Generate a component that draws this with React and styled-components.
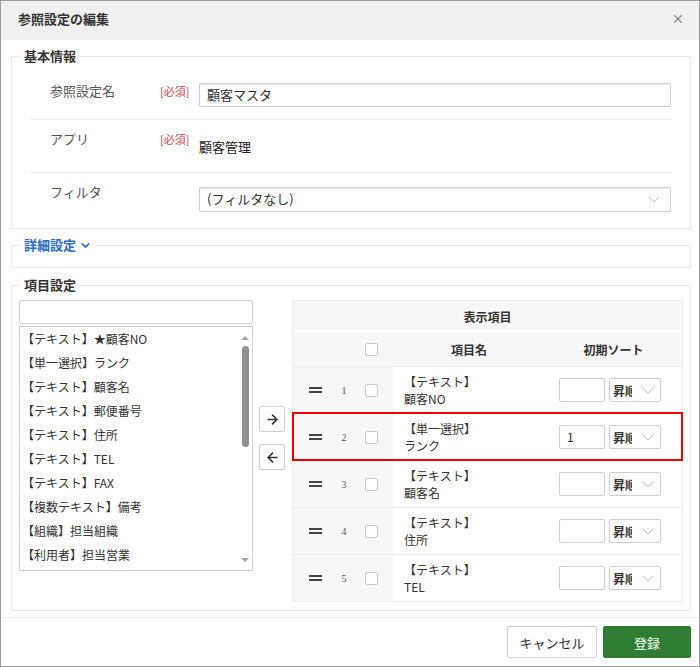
import { styled, createGlobalStyle } from "styled-components"
import { ArrowRight, ArrowLeft, ChevronDown, X } from "lucide-react"

const GlobalStyle = createGlobalStyle`
  body {
    margin: 0;
    font-family: "Noto Sans CJK JP", "Liberation Sans", sans-serif;
    font-size: 12px;
    color: #333;
    background: #fff;
  }
`

const fields = [
  "【テキスト】★顧客NO",
  "【単一選択】ランク",
  "【テキスト】顧客名",
  "【テキスト】郵便番号",
  "【テキスト】住所",
  "【テキスト】TEL",
  "【テキスト】FAX",
  "【複数テキスト】備考",
  "【組織】担当組織",
  "【利用者】担当営業",
]

const rows = [
  { no: 1, type: "【テキスト】", name: "顧客NO", sort: "" },
  { no: 2, type: "【単一選択】", name: "ランク", sort: "1", marked: true },
  { no: 3, type: "【テキスト】", name: "顧客名", sort: "" },
  { no: 4, type: "【テキスト】", name: "住所", sort: "" },
  { no: 5, type: "【テキスト】", name: "TEL", sort: "" },
]

const Chevron = () => (
  <svg width="12" height="7" viewBox="0 0 12 7">
    <polyline points="1,1 6,6 11,1" fill="none" stroke="#bdbdbd" strokeWidth="1" />
  </svg>
)

const Handle = () => (
  <svg width="13" height="6" viewBox="0 0 13 6">
    <rect x="0" y="0" width="13" height="2" fill="#444" />
    <rect x="0" y="4" width="13" height="2" fill="#444" />
  </svg>
)

export default function App() {
  return (
    <>
      <GlobalStyle />
      <Dialog>
        <Header>
          <Title>参照設定の編集</Title>
          <X size={14} color="#888" strokeWidth={2} />
        </Header>

        <Body>
          <Fieldset $pt={2} $pb={3}>
            <Legend>基本情報</Legend>
            <FormRow>
              <Label>参照設定名</Label>
              <Required>[必須]</Required>
              <Value>
                <TextInput>顧客マスタ</TextInput>
              </Value>
            </FormRow>
            <FormRow>
              <Label>アプリ</Label>
              <Required>[必須]</Required>
              <Value>
                <PlainValue>顧客管理</PlainValue>
              </Value>
            </FormRow>
            <FormRow>
              <Label>フィルタ</Label>
              <Required />
              <Value>
                <SelectBox>
                  <span>(フィルタなし)</span>
                  <Chevron />
                </SelectBox>
              </Value>
            </FormRow>
          </Fieldset>

          <Fieldset $mt={7} $pb={13}>
            <LinkLegend>
              詳細設定 <ChevronDown size={13} strokeWidth={3} />
            </LinkLegend>
          </Fieldset>

          <Fieldset $mt={8} $pt={6} $pb={8}>
            <Legend>項目設定</Legend>
            <Columns>
              <LeftCol>
                <SearchInput />
                <ListBox>
                  <ListItems>
                    {fields.map((f) => (
                      <ListItem key={f}>{f}</ListItem>
                    ))}
                  </ListItems>
                  <Scrollbar>
                    <ArrowUp />
                    <Thumb />
                    <ArrowDown />
                  </Scrollbar>
                </ListBox>
              </LeftCol>

              <ArrowCol>
                <MoveButton>
                  <ArrowRight size={15} strokeWidth={2.6} color="#333" />
                </MoveButton>
                <MoveButton>
                  <ArrowLeft size={15} strokeWidth={2.6} color="#333" />
                </MoveButton>
              </ArrowCol>

              <Table>
                <TableTitle>表示項目</TableTitle>
                <HeadRow>
                  <ControlCell>
                    <HandleCell />
                    <NumberCell />
                    <Checkbox />
                  </ControlCell>
                  <HeadCell>項目名</HeadCell>
                  <HeadCell>初期ソート</HeadCell>
                </HeadRow>
                {rows.map((r) => (
                  <BodyRow key={r.no} $marked={r.marked}>
                    <ControlCell>
                      <HandleCell>
                        <Handle />
                      </HandleCell>
                      <NumberCell>{r.no}</NumberCell>
                      <Checkbox />
                    </ControlCell>
                    <NameCell>
                      <div>{r.type}</div>
                      <div>{r.name}</div>
                    </NameCell>
                    <SortCell>
                      <SortInput>{r.sort}</SortInput>
                      <OrderSelect>
                        <OrderText>昇順</OrderText>
                        <Chevron />
                      </OrderSelect>
                    </SortCell>
                  </BodyRow>
                ))}
              </Table>
            </Columns>
          </Fieldset>
        </Body>

        <Footer>
          <CancelButton>キャンセル</CancelButton>
          <SubmitButton>登録</SubmitButton>
        </Footer>
      </Dialog>
    </>
  )
}

const Dialog = styled.div`
  width: 700px;
  height: 667px;
  box-sizing: border-box;
  border: 1px solid #9c9c9c;
  display: flex;
  flex-direction: column;
  background: #fff;
`

const Header = styled.div`
  height: 41px;
  box-sizing: border-box;
  background: #f0f0f0;
  display: flex;
  align-items: center;
  justify-content: space-between;
  padding: 0 14px 4px 17px;
`

const Title = styled.div`
  font-size: 13px;
  font-weight: bold;
  color: #333;
`

const Body = styled.div`
  flex: 1;
  display: flex;
  flex-direction: column;
  padding: 7px 8px 6px 10px;
`

const Fieldset = styled.fieldset`
  margin: ${(p) => p.$mt || 0}px 0 0;
  padding: ${(p) => p.$pt || 0}px 7px ${(p) => p.$pb || 0}px;
  border: 1px solid #e8e8e8;
  min-width: 0;
`

const Legend = styled.legend`
  margin-left: 1px;
  padding: 0 4px;
  font-size: 13px;
  line-height: 18px;
  font-weight: bold;
  color: #333;
`

const LinkLegend = styled(Legend)`
  display: flex;
  align-items: center;
  gap: 3px;
  color: #2a6cbf;
`

const FormRow = styled.div`
  display: flex;
  align-items: flex-start;
  margin: 0 12px 0 11px;
  padding: 12px 0;
  border-bottom: 1px solid #ececec;

  &:first-of-type {
    padding: 14px 0 10px;
  }

  &:first-of-type > div:not(:last-child) {
    margin-top: 3px;
  }

  &:last-child {
    border-bottom: none;
  }
`

const Label = styled.div`
  width: 130px;
  box-sizing: border-box;
  padding-left: 20px;
  font-size: 13px;
  line-height: 14px;
  color: #555;
`

const Required = styled.div`
  width: 39px;
  font-size: 11px;
  line-height: 14px;
  color: #c9474a;
`

const Value = styled.div`
  flex: 1;
  height: 28px;
  display: flex;
  align-items: center;
`

const TextInput = styled.div`
  flex: 1;
  height: 24px;
  box-sizing: border-box;
  border: 1px solid #cfcfcf;
  border-radius: 2px;
  box-shadow: inset 0 1px 1px rgba(0, 0, 0, 0.06);
  padding: 0 7px;
  font-size: 13px;
  line-height: 22px;
  color: #333;
`

const PlainValue = styled.div`
  font-size: 13px;
  color: #222;
`

const SelectBox = styled(TextInput)`
  height: 25px;
  display: flex;
  align-items: center;
  justify-content: space-between;
  padding-right: 10px;
`

const Columns = styled.div`
  display: flex;
  align-items: flex-start;
`

const LeftCol = styled.div`
  width: 234px;
  display: flex;
  flex-direction: column;
  gap: 2px;
`

const SearchInput = styled.div`
  height: 24px;
  box-sizing: border-box;
  border: 1px solid #cfcfcf;
  border-radius: 2px;
`

const ListBox = styled.div`
  height: 245px;
  box-sizing: border-box;
  border: 1px solid #cfcfcf;
  display: flex;
  overflow: hidden;
`

const ListItems = styled.div`
  flex: 1;
`

const ListItem = styled.div`
  height: 24px;
  line-height: 23px;
  padding-left: 2px;
  font-size: 12px;
  color: #333;
  white-space: nowrap;
`

const Scrollbar = styled.div`
  width: 12px;
  margin-right: 1px;
  display: flex;
  flex-direction: column;
  align-items: center;
  padding: 9px 0 8px;
  box-sizing: border-box;
`

const ArrowUp = styled.div`
  width: 0;
  height: 0;
  border-left: 4px solid transparent;
  border-right: 4px solid transparent;
  border-bottom: 4px solid #a3a3a3;
`

const ArrowDown = styled.div`
  margin-top: auto;
  width: 0;
  height: 0;
  border-left: 4px solid transparent;
  border-right: 4px solid transparent;
  border-top: 4px solid #a3a3a3;
`

const Thumb = styled.div`
  margin-top: 6px;
  width: 7px;
  height: 101px;
  border-radius: 4px;
  background: #8f8f8f;
`

const ArrowCol = styled.div`
  display: flex;
  flex-direction: column;
  gap: 12px;
  margin: 106px 7px 0 6px;
`

const MoveButton = styled.div`
  width: 26px;
  height: 26px;
  box-sizing: border-box;
  border: 1px solid #cfcfcf;
  border-radius: 2px;
  background: #fff;
  display: flex;
  align-items: center;
  justify-content: center;
`

const Table = styled.div`
  flex: 1;
  border: 1px solid #ededed;
  display: flex;
  flex-direction: column;
`

const TableTitle = styled.div`
  height: 30px;
  background: #f7f7f7;
  border-bottom: 1px solid #fdfdfd;
  display: flex;
  align-items: center;
  justify-content: center;
  font-size: 12px;
  font-weight: bold;
  color: #333;
`

const GridRow = styled.div`
  display: grid;
  grid-template-columns: 100px 1fr 137px;
`

const HeadRow = styled(GridRow)`
  height: 34px;
  background: #f7f7f7;
`

const BodyRow = styled(GridRow)`
  height: 47px;
  box-sizing: border-box;
  border-top: 1px solid #eeeeee;
  outline: ${(p) => (p.$marked ? "2px solid #ee0000" : "none")};
  outline-offset: -1px;
  position: relative;
  z-index: ${(p) => (p.$marked ? 1 : 0)};
`

const ControlCell = styled.div`
  background: #f7f7f7;
  display: flex;
  align-items: center;
`

const HandleCell = styled.div`
  width: 44px;
  display: flex;
  justify-content: center;
`

const NumberCell = styled.div`
  width: 14px;
  text-align: center;
  font-family: "Liberation Serif", serif;
  font-size: 10px;
  color: #555;
`

const Checkbox = styled.div`
  margin-left: 14px;
  width: 13px;
  height: 13px;
  box-sizing: border-box;
  border: 1px solid #c9c9c9;
  border-radius: 2px;
  background: #fff;
`

const HeadCell = styled.div`
  display: flex;
  align-items: center;
  justify-content: center;
  font-size: 12px;
  font-weight: bold;
  color: #333;
`

const NameCell = styled.div`
  display: flex;
  flex-direction: column;
  justify-content: center;
  padding-left: 11px;
  font-size: 12px;
  line-height: 17px;
  color: #333;
`

const SortCell = styled.div`
  display: flex;
  align-items: center;
  justify-content: flex-end;
  gap: 4px;
  padding-right: 21px;
`

const SortInput = styled.div`
  width: 46px;
  height: 24px;
  box-sizing: border-box;
  border: 1px solid #cfcfcf;
  border-radius: 2px;
  padding-left: 7px;
  font-size: 12px;
  line-height: 22px;
  color: #222;
`

const OrderSelect = styled.div`
  width: 52px;
  height: 24px;
  box-sizing: border-box;
  border: 1px solid #cfcfcf;
  border-radius: 2px;
  display: flex;
  align-items: center;
  padding-left: 3px;
`

const OrderText = styled.span`
  width: 19px;
  overflow: hidden;
  white-space: nowrap;
  font-size: 12px;
  font-weight: bold;
  color: #333;
  margin-right: 10px;
`

const Footer = styled.div`
  border-top: 1px solid #ececec;
  padding: 8px 8px 8px 0;
  display: flex;
  justify-content: flex-end;
  gap: 6px;
`

const CancelButton = styled.div`
  width: 90px;
  height: 32px;
  box-sizing: border-box;
  border: 1px solid #cfcfcf;
  border-radius: 2px;
  background: #fff;
  display: flex;
  align-items: center;
  justify-content: center;
  font-size: 13px;
  color: #333;
`

const SubmitButton = styled(CancelButton)`
  width: 88px;
  border-color: #2e7d32;
  background: #2e7d32;
  color: #fff;
`
